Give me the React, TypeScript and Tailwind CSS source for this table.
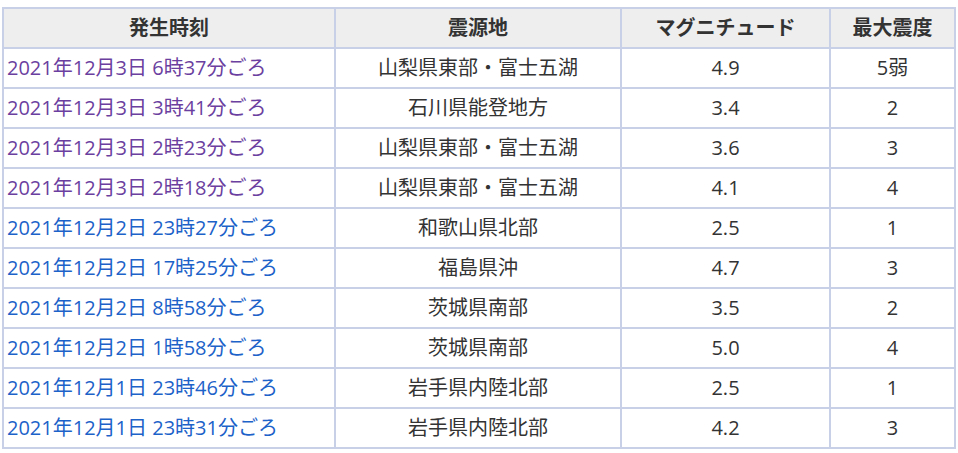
const rows = [
  { t: "2021年12月3日 6時37分ごろ", p: "山梨県東部・富士五湖", m: "4.9", s: "5弱", visited: true },
  { t: "2021年12月3日 3時41分ごろ", p: "石川県能登地方", m: "3.4", s: "2", visited: true },
  { t: "2021年12月3日 2時23分ごろ", p: "山梨県東部・富士五湖", m: "3.6", s: "3", visited: true },
  { t: "2021年12月3日 2時18分ごろ", p: "山梨県東部・富士五湖", m: "4.1", s: "4", visited: true },
  { t: "2021年12月2日 23時27分ごろ", p: "和歌山県北部", m: "2.5", s: "1", visited: false },
  { t: "2021年12月2日 17時25分ごろ", p: "福島県沖", m: "4.7", s: "3", visited: false },
  { t: "2021年12月2日 8時58分ごろ", p: "茨城県南部", m: "3.5", s: "2", visited: false },
  { t: "2021年12月2日 1時58分ごろ", p: "茨城県南部", m: "5.0", s: "4", visited: false },
  { t: "2021年12月1日 23時46分ごろ", p: "岩手県内陸北部", m: "2.5", s: "1", visited: false },
  { t: "2021年12月1日 23時31分ごろ", p: "岩手県内陸北部", m: "4.2", s: "3", visited: false },
];

export default function App() {
  return (
    <div className="min-h-screen bg-white pl-[2px] pt-[7px] font-['Open_Sans','Noto_Sans_CJK_JP',sans-serif] text-[20px] leading-none text-[#333]">
      <table className="w-[952px] table-fixed border-collapse border-2 border-[#c8d0e8]">
        <colgroup>
          <col className="w-[332px]" />
          <col className="w-[286px]" />
          <col className="w-[209px]" />
          <col className="w-[125px]" />
        </colgroup>
        <thead>
          <tr className="h-[40px] bg-[#eeeeee]">
            <th className="border-2 border-[#c8d0e8] font-bold">発生時刻</th>
            <th className="border-2 border-[#c8d0e8] font-bold">震源地</th>
            <th className="border-2 border-[#c8d0e8] font-bold">マグニチュード</th>
            <th className="border-2 border-[#c8d0e8] font-bold">最大震度</th>
          </tr>
        </thead>
        <tbody>
          {rows.map((r, i) => (
            <tr key={i} className="h-[40px]">
              <td className="border-2 border-[#c8d0e8] pl-[3px]">
                <a href="#" className={r.visited ? "text-[#6b3fa0]" : "text-[#1c62c9]"}>
                  {r.t}
                </a>
              </td>
              <td className="border-2 border-[#c8d0e8] text-center">{r.p}</td>
              <td className="border-2 border-[#c8d0e8] text-center">{r.m}</td>
              <td className="border-2 border-[#c8d0e8] text-center">{r.s}</td>
            </tr>
          ))}
        </tbody>
      </table>
    </div>
  );
}
